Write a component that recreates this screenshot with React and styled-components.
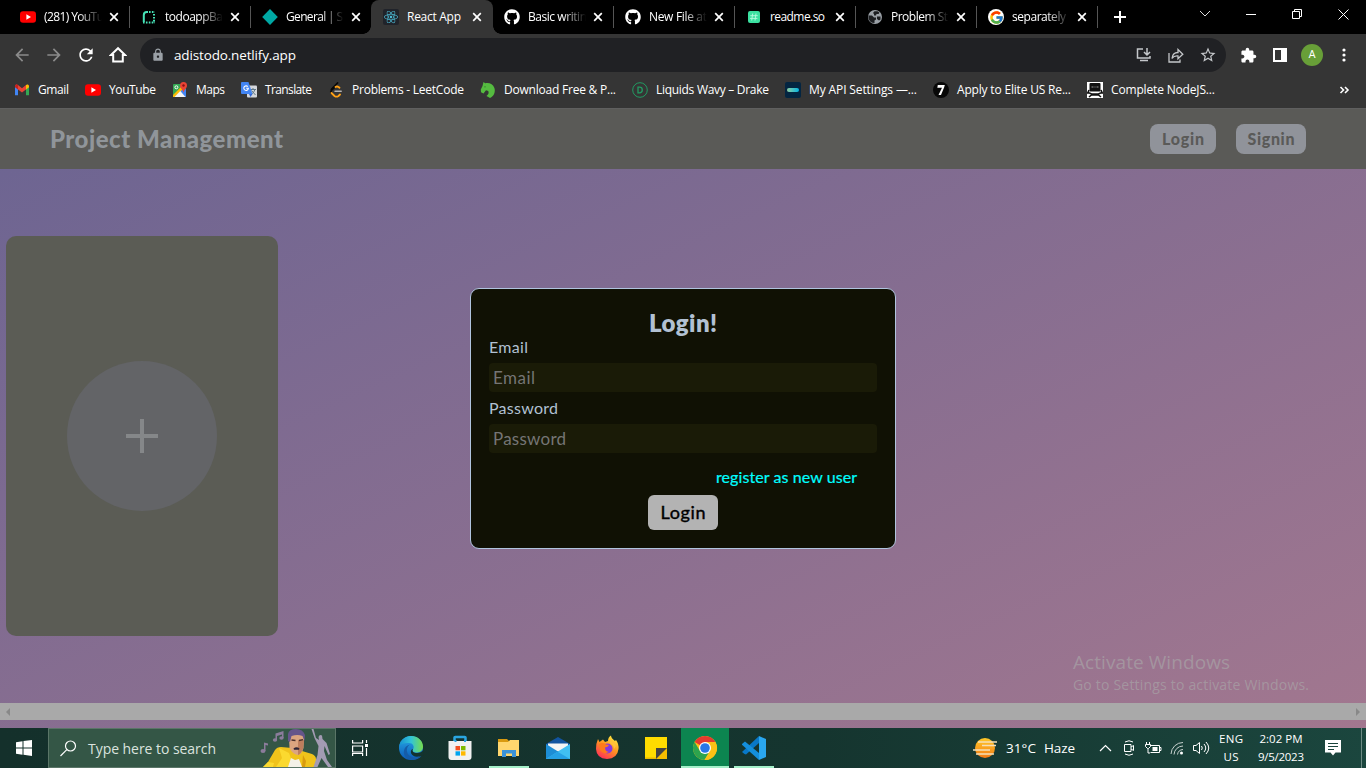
import React, { useLayoutEffect, useRef } from "react";
import styled, { createGlobalStyle } from "styled-components";
import { FaGithub, FaReact } from "react-icons/fa";
import { FcGoogle } from "react-icons/fc";
import { MdArrowBack, MdArrowForward, MdRefresh, MdLock, MdStarBorder, MdExtension } from "react-icons/md";

const Global = createGlobalStyle`
  * { box-sizing: border-box; }
  body { margin: 0; background: #000; overflow: hidden; font-family: "Open Sans", "Noto Sans", sans-serif; }
  svg { display: block; flex: none; }
`;

/* Text that is tracked in or out so that it fills a known width. */
const Line = styled.span`
  display: block;
  flex: none;
  width: ${(p) => p.$w}px;
  white-space: nowrap;
`;
function Fit({ w, children }) {
  const ref = useRef(null);
  useLayoutEffect(() => {
    const el = ref.current;
    el.style.letterSpacing = "0px";
    const natural = el.getBoundingClientRect().width;
    el.style.letterSpacing = (w - natural) / Math.max(1, children.length - 1) + "px";
  }, [w, children]);
  return (
    <Line $w={w}>
      <span ref={ref}>{children}</span>
    </Line>
  );
}

const Screen = styled.div`
  width: 1366px;
  height: 768px;
  display: flex;
  flex-direction: column;
  overflow: hidden;
`;

/* ---------- browser tabs ---------- */
const TabStrip = styled.div`
  height: 34px;
  flex: none;
  display: flex;
  background: #000;
  color: #fff;
  padding-left: 9px;
`;
const Tab = styled.div`
  position: relative;
  width: 121px;
  height: 34px;
  display: flex;
  align-items: center;
  padding-left: 11px;
  font-size: 12px;
  line-height: 16px;
  border-right: 1px solid transparent;
  border-image: ${(p) => (p.$rule ? "linear-gradient(#000 7px, #555 7px, #555 27px, #000 27px) 1" : "none")};
  &::before {
    content: "";
    display: ${(p) => (p.$active ? "block" : "none")};
    position: absolute;
    inset: 0 -1px 0 -1px;
    background: #353535;
    border-radius: 8px 8px 0 0;
  }
  &::after {
    content: "";
    display: ${(p) => (p.$active ? "block" : "none")};
    position: absolute;
    left: -9px;
    right: -9px;
    bottom: 0;
    height: 8px;
    background:
      radial-gradient(circle at 0 0, transparent 7.5px, #353535 8px) left / 8px 8px no-repeat,
      radial-gradient(circle at 100% 0, transparent 7.5px, #353535 8px) right / 8px 8px no-repeat;
  }
  > * { position: relative; z-index: 1; }
`;
const TabTitle = styled.div`
  width: 58px;
  margin: 0 7px 0 8px;
  overflow: hidden;
  ${(p) => p.$fade && "mask-image: linear-gradient(90deg, #000 60%, transparent);"}
`;
const NewTab = styled.div`
  width: 43px;
  display: grid;
  place-items: center;
`;
const WindowButtons = styled.div`
  margin-left: auto;
  display: flex;
  height: 28px;
`;
const WindowButton = styled.div`
  width: 46px;
  display: grid;
  place-items: center;
`;

/* ---------- toolbar ---------- */
const Toolbar = styled.div`
  height: 41px;
  flex: none;
  display: flex;
  align-items: center;
  background: #353535;
  color: #fff;
  padding: 1px 6px 0;
`;
const ToolButton = styled.div`
  width: 32px;
  height: 32px;
  flex: none;
  display: grid;
  place-items: center;
  color: ${(p) => (p.$dim ? "#8b8b8b" : "#fff")};
`;
const Omnibox = styled.div`
  width: 1086px;
  height: 34px;
  margin: 0 6px;
  border-radius: 17px;
  background: #202124;
  display: flex;
  align-items: center;
  padding: 0 2px 0 11px;
  font-size: 13.5px;
  svg.lock { margin-right: 9px; color: #9aa0a6; }
`;
const OmniActions = styled.div`
  margin-left: auto;
  display: flex;
  > div { color: #c4c7ca; }
`;
const Avatar = styled.div`
  width: 22px;
  height: 22px;
  border-radius: 50%;
  background: #689f38;
  font: 11px/22px Roboto, sans-serif;
  text-align: center;
`;
const Bookmarks = styled.div`
  height: 34px;
  flex: none;
  display: flex;
  align-items: center;
  gap: 16px;
  padding: 0 14px 4px 14px;
  background: #353535;
  border-bottom: 1px solid #5f5f5f;
  color: #fff;
`;
const Bookmark = styled.div`
  display: flex;
  align-items: center;
  gap: 8px;
  font-size: 12px;
  line-height: 16px;
`;
const More = styled.div`
  margin-left: auto;
`;

/* ---------- page ---------- */
const Page = styled.main`
  position: relative;
  height: 619px;
  flex: none;
  display: flex;
  flex-direction: column;
  background: linear-gradient(to bottom right, #6b6492, #a2778f);
  font-family: Lato, sans-serif;
`;
const AppHeader = styled.header`
  height: 60px;
  flex: none;
  display: flex;
  align-items: center;
  justify-content: space-between;
  padding: 0 60px 1px 50px;
  background: #5a5a57;
`;
const Brand = styled.h1`
  margin: 0;
  font-size: 24px;
  line-height: 30px;
  font-weight: 900;
  color: #90959a;
`;
const HeaderButtons = styled.nav`
  display: flex;
  gap: 20px;
`;
const HeaderButton = styled.button`
  width: ${(p) => p.$w}px;
  height: 30px;
  border: 0;
  padding: 0;
  border-radius: 8px;
  display: flex;
  align-items: center;
  justify-content: center;
  background: #90939a;
  color: #5a5a58;
  font: 900 16px/20px Lato, sans-serif;
`;
const Board = styled.section`
  height: 534px;
  padding: 67px 6px 0;
`;
const AddCard = styled.div`
  width: 272px;
  height: 400px;
  border-radius: 10px;
  background: #5b5c55;
  display: grid;
  place-items: center;
`;
const AddCircle = styled.div`
  width: 150px;
  height: 150px;
  border-radius: 50%;
  background: #636467;
  display: grid;
  place-items: center;
`;
const ScrollTrack = styled.div`
  height: 17px;
  background: #a9a9a9;
  display: flex;
  align-items: center;
  justify-content: space-between;
  padding: 0 6px;
`;
const Modal = styled.form`
  position: absolute;
  left: 470px;
  top: 179px;
  width: 426px;
  height: 261px;
  border: 1px solid #b0c4de;
  border-radius: 9px;
  background: #101104;
  color: #b2c1d3;
  padding: 19px 18px 18px;
  display: flex;
  flex-direction: column;
`;
const ModalTitle = styled.h2`
  margin: 0;
  display: flex;
  justify-content: center;
  font-size: 24px;
  line-height: 29px;
  font-weight: 800;
`;
const Label = styled.label`
  font-size: 16px;
  line-height: 20px;
  margin-bottom: 6px;
`;
const Field = styled.div`
  height: 29px;
  flex: none;
  margin-bottom: 6px;
  padding: 0 4px;
  border-radius: 4px;
  background: #1a1b07;
  color: #757575;
  font-size: 17px;
  line-height: 30px;
`;
const Register = styled.a`
  align-self: flex-end;
  margin: 8px 20px 8px 0;
  color: #00ffff;
  font-size: 16px;
  line-height: 20px;
  -webkit-text-stroke: 0.2px #00ffff;
`;
const Submit = styled.button`
  align-self: center;
  width: 70px;
  height: 35px;
  border: 0;
  border-radius: 6px;
  background: #b3b3b3;
  color: #000;
  display: flex;
  align-items: center;
  justify-content: center;
  padding: 0 0 1px;
  font: 18px/22px Lato, sans-serif;
  -webkit-text-stroke: 0.4px #000;
`;
const Watermark = styled.div`
  position: absolute;
  left: 1073px;
  top: 541px;
  font-family: "Open Sans", sans-serif;
  color: rgba(170, 170, 170, 0.62);
  font-size: 19px;
  line-height: 25px;
`;
const WatermarkNote = styled.div`
  font-size: 14px;
  line-height: 20px;
`;

/* ---------- taskbar ---------- */
const Taskbar = styled.footer`
  height: 40px;
  flex: none;
  display: flex;
  background: linear-gradient(90deg, #14302b, #15352f 60%, #1b463e);
  color: #fff;
`;
const StartButton = styled.div`
  width: 48px;
  display: grid;
  place-items: center;
`;
const SearchBox = styled.div`
  width: 288px;
  border: 1px solid #5a7567;
  background: #345646;
  display: flex;
  align-items: center;
  padding-left: 11px;
  font-size: 14px;
  color: #dbe3df;
  > span { margin-left: 11px; }
`;
const SearchArt = styled.div`
  margin: 0 1px 0 auto;
  align-self: flex-end;
`;
const TaskView = styled.div`
  width: 48px;
  margin-right: 3px;
  display: grid;
  place-items: center;
`;
const TaskIcons = styled.div`
  display: flex;
  gap: 1px;
`;
const TaskIcon = styled.div`
  width: 48px;
  height: 40px;
  display: grid;
  place-items: center;
  background: ${(p) =>
    p.$open ? `linear-gradient(#a4f0c9, #a4f0c9) center bottom / ${p.$active ? 48 : 40}px 2px no-repeat` : "none"}
    ${(p) => (p.$active ? ", #0c8550" : "")};
`;
const Tray = styled.div`
  margin-left: auto;
  display: flex;
  align-items: center;
  font-size: 13.5px;
`;
const Weather = styled.div`
  display: flex;
  align-items: center;
  gap: 8px;
  margin-right: 18px;
`;
const TrayIcon = styled.div`
  width: 24px;
  display: grid;
  place-items: center;
`;
const Stack = styled.div`
  width: ${(p) => p.$w}px;
  display: flex;
  flex-direction: column;
  align-items: center;
  font-size: 11.5px;
  line-height: 17.5px;
  padding-bottom: 1px;
`;
const Notice = styled.div`
  width: 49px;
  height: 40px;
  display: grid;
  place-items: center;
  padding-right: 8px;
  border-right: 1px solid #6d8b84;
  margin-right: 4px;
`;

const YouTube = () => (
  <svg width="16" height="16" viewBox="0 0 16 16">
    <rect y="2.3" width="16" height="11.4" rx="3" fill="#f00" />
    <path d="M6.4 5.3v5.4L11 8z" fill="#fff" />
  </svg>
);
const Railway = () => (
  <svg width="16" height="16" viewBox="0 0 16 16" fill="none" stroke="#46e3b7" strokeWidth="2">
    <path d="M2.8 13V6q0-3 3-3H7" />
    <path d="M8 3h6M13 5v9M2 13.5h12" strokeDasharray="1.6 1.3" />
  </svg>
);
const Diamond = () => (
  <svg width="16" height="16" viewBox="0 0 16 16">
    <path d="M8 0l7.8 8L8 16 .2 8z" fill="#00a8a4" />
  </svg>
);
const ReactTile = styled.div`
  width: 16px;
  height: 16px;
  display: grid;
  place-items: center;
  border-radius: 2px;
  background: #20232a;
  color: #4dbbd5;
`;
const Hash = () => (
  <svg width="16" height="16" viewBox="0 0 16 16">
    <rect x="2" y="2" width="12" height="12" rx="2" fill="#3be0a0" />
    <path d="M6.7 4.5l-1 7M10 4.5l-1 7M4.3 6.7h7.4M4 9.4h7.4" stroke="#b8fbe0" strokeWidth=".9" />
  </svg>
);
const WhiteDisc = styled.div`
  width: 16px;
  height: 16px;
  border-radius: 50%;
  background: #fff;
  display: grid;
  place-items: center;
`;
const Globe = () => (
  <svg width="16" height="16" viewBox="0 0 16 16">
    <circle cx="8" cy="8" r="7" fill="#9aa0a6" />
    <path d="M1.500 6.500h3.500l2 2h2v2l-1.500 1 0 2.500q-5 0-6-5zM7.500 2.300h3l2 1.200-1 1.500H9.500L9 6.500H7V5l-1-1zM10 7.500h3.500v3l-1.500 1L10 10z" fill="#1c1e21" />
  </svg>
);
const Cross = () => (
  <svg width="10" height="10" viewBox="0 0 10 10">
    <path d="M1.200 1.200l7.600 7.600M8.800 1.200L1.200 8.800" stroke="#fff" strokeWidth="1.700" />
  </svg>
);

const Gmail = () => (
  <svg width="16" height="16" viewBox="0 0 16 16">
    <path d="M1 4v9.3h3V7z" fill="#4285f4" />
    <path d="M12 7v6.3h3V4z" fill="#34a853" />
    <path d="M1 4.2C1 2.5 3 2 4 3l4 3.3L12 3l.3 4.2L8 10.5 3.7 7.2z" fill="#ea4335" />
    <path d="M1 4.2C1 2.5 3 2 4 3v4.4L1 5.2z" fill="#c5221f" />
    <path d="M15 4.2C15 2.5 13 2 12 3v4.4l3-2.2z" fill="#fbbc04" />
  </svg>
);
const Maps = () => (
  <svg width="16" height="16" viewBox="0 0 16 16">
    <rect x="1" y="2" width="13" height="13" rx="1" fill="#34a853" />
    <path d="M8 8l6-1v8H8z" fill="#4285f4" />
    <path d="M1 13L11 3l2 2L3 15H1z" fill="#fbbc04" />
    <path d="M2.500 15L8.300 9l5.200 6z" fill="#f5f5f5" />
    <circle cx="4.400" cy="5.300" r="1.500" fill="none" stroke="#fff" />
    <path d="M11.500 0a3.500 3.500 0 0 1 3.500 3.500c0 2.500-2.500 3.500-3.500 7-1-3.500-3.500-4.500-3.500-7A3.500 3.500 0 0 1 11.500 0z" fill="#ea4335" />
    <circle cx="11.500" cy="3.500" r="1.200" fill="#811" />
  </svg>
);
const Translate = () => (
  <svg width="16" height="16" viewBox="0 0 16 16">
    <rect x="6" y="3.500" width="10" height="12" rx="1" fill="#d4d7dc" />
    <path d="M9 7.500h6M12 6v1.500M14 7.500q-1 3.500-4 5M10.500 8.500l4 4.500" stroke="#607988" fill="none" />
    <path d="M1 0h6.500l4 12H1a1 1 0 0 1-1-1V1a1 1 0 0 1 1-1z" fill="#4285f4" />
    <path d="M6.800 4.600a2.300 2.300 0 1 0 .6 1.700H5.200" stroke="#fff" fill="none" strokeWidth="1.100" />
    <path d="M8 12h3.500L9.500 15z" fill="#3367d6" />
  </svg>
);
const Leet = () => (
  <svg width="16" height="16" viewBox="0 0 16 16" fill="none" strokeLinecap="round" strokeWidth="1.800">
    <path d="M9.500 1L3.500 7.300" stroke="#080808" />
    <path d="M6.300 5.500L3.500 8.200q-1.300 1.600 0 3" stroke="#080808" />
    <path d="M3.500 11l3 3q2 1.400 4 0l1.500-1.500" stroke="#ffa116" />
    <path d="M11.500 5.800l-1-.8q-1.500-1-3 0" stroke="#ffa116" />
    <path d="M7 9.300h6.200" stroke="#b3b3b3" strokeWidth="1.500" />
  </svg>
);
const Horse = () => (
  <svg width="16" height="16" viewBox="0 0 16 16">
    <path d="M3.500 0l1.700 1.300C9 .3 13 2 14.400 6c1.300 4-.6 8.500-4.400 10L6.500 14c2-1.500 2.500-3 1.800-5L6 8.300 3.500 11.500 1 10.300.8 7.500 2.500 4z" fill="#55bb40" />
    <circle cx="5" cy="4.800" r=".6" fill="#246b25" />
  </svg>
);
const Drake = () => (
  <svg width="16" height="16" viewBox="0 0 16 16" fill="none" stroke="#229b62">
    <circle cx="8" cy="8" r="7.300" />
    <path d="M6 5.200h1.500Q10.300 5.200 10.300 8T7.500 10.800H6z" strokeWidth="1.300" />
  </svg>
);
const Tmdb = () => (
  <svg width="16" height="16" viewBox="0 0 16 16">
    <defs>
      <linearGradient id="tm">
        <stop stopColor="#90cea1" />
        <stop offset="1" stopColor="#01b4e4" />
      </linearGradient>
    </defs>
    <rect width="16" height="16" rx="2" fill="#032541" />
    <rect x="2" y="6" width="12" height="4" rx="2" fill="url(#tm)" />
  </svg>
);
const Seven = () => (
  <svg width="16" height="16" viewBox="0 0 16 16">
    <circle cx="8" cy="8" r="8" fill="#080808" />
    <path d="M4.800 3h7l-.6 2.300L8 13H5.500L9 5.800H4.300z" fill="#fff" />
  </svg>
);
const Rover = () => (
  <svg width="16" height="16" viewBox="0 0 16 16">
    <rect width="16" height="16" fill="#fff" />
    <rect x="2.500" y="1" width="11" height="8.500" rx="1" fill="#111" />
    <path d="M4.500 5h2M7.500 5h1M9.500 5h2" stroke="#999" />
    <path d="M0 11h2.500l2 1h7l2-1H16M2 15l2.500-2h7L14 15M2 8l-1 2.500M14 8l1 2.500" stroke="#111" strokeWidth="1.600" fill="none" />
  </svg>
);

const tabs = [
  { t: "(281) YouTu", w: 60, icon: <YouTube />, fade: true, rule: true },
  { t: "todoappBa", w: 58, icon: <Railway />, fade: true, rule: true },
  { t: "General | S", w: 57, icon: <Diamond />, fade: true },
  { t: "React App", w: 54, icon: <ReactTile><FaReact size={14} /></ReactTile>, active: true },
  { t: "Basic writin", w: 59, icon: <FaGithub size={16} />, fade: true, rule: true },
  { t: "New File at", w: 58, icon: <FaGithub size={16} />, fade: true, rule: true },
  { t: "readme.so", w: 55, icon: <Hash />, rule: true },
  { t: "Problem St", w: 57, icon: <Globe />, fade: true, rule: true },
  { t: "separately", w: 54, icon: <WhiteDisc><FcGoogle size={15} /></WhiteDisc>, fade: true, rule: true },
];

const bookmarks = [
  ["Gmail", 31, <Gmail />],
  ["YouTube", 47, <YouTube />],
  ["Maps", 29, <Maps />],
  ["Translate", 47, <Translate />],
  ["Problems - LeetCode", 112, <Leet />],
  ["Download Free & P...", 112, <Horse />],
  ["Liquids Wavy – Drake", 113, <Drake />],
  ["My API Settings —...", 108, <Tmdb />],
  ["Apply to Elite US Re...", 114, <Seven />],
  ["Complete NodeJS...", 104, <Rover />],
];

const Performer = () => (
  <svg width="74" height="38" viewBox="0 0 74 38">
    <g fill="#8b7c9b">
      <ellipse cx="3" cy="22" rx="2.500" ry="2" />
      <path d="M4 22V13.500l4 1v2l-2.500-.5v6z" />
      <ellipse cx="15" cy="11" rx="2.200" ry="1.800" />
      <ellipse cx="21.500" cy="9" rx="2.200" ry="1.800" />
      <path d="M15.500 11V4.500L23.500 2v7H22V5.500l-5 1.500v4z" />
    </g>
    <path d="M3 38l5-5 7-12q2-3 6-3l11 1 10 3 10 3q4 2 4 5v8z" fill="#f0c31a" />
    <path d="M3 38l5-5 6 1-1 4zM19 19l10 5 3 8-2 6H16l6-9z" fill="#fbd92f" />
    <path d="M31 29l4 2 4-1 3 8H28z" fill="#f4f1e8" />
    <path d="M43 26l3 6-1 6h-3z" fill="#d99b0c" />
    <path d="M29 8q0-5 7-5t8 5l-.500 11q-2 7-6 7-5-1-8-7z" fill="#dba580" />
    <path d="M38 11h6l-1 9q-2 5-5 6z" fill="#bd7e5d" />
    <path d="M28 12V5q1-5 8-5t9 6l-.500 6-2-5q-5-2-11 0l-1.500 6z" fill="#65558a" />
    <path d="M33.500 19.500q3-2.500 6 0l-.500 1.200h-5z" fill="#2d2435" />
    <path d="M31.500 11l4 .5M39 11.500l4-.8" stroke="#4a302b" strokeWidth="1.300" />
    <path d="M53.500 0l2.500 9 3 2-.500-3q1-3 3.500-1.500l.5 3.500 4 4 3.500 11-1.500 1-4-9-.500 5 3 9 5 7h-4l-6.500-9-4 9h-4l4-12 1-9-4-8-3-9z" fill="#a39bb3" />
  </svg>
);

const Edge = () => (
  <svg width="26" height="26" viewBox="0 0 26 26">
    <defs>
      <linearGradient id="ed">
        <stop stopColor="#168fd2" />
        <stop offset=".5" stopColor="#32c4d7" />
        <stop offset="1" stopColor="#77dd4b" />
      </linearGradient>
      <linearGradient id="eb" x1="0" y1="0" x2="0" y2="1">
        <stop stopColor="#28a9e6" />
        <stop offset="1" stopColor="#0b5ab8" />
      </linearGradient>
    </defs>
    <circle cx="13" cy="13" r="12" fill="url(#eb)" />
    <path d="M1 12C2 5 7 1 13 1c7 0 12 5 12 10.500 0 4-3 6-6.500 6-3 0-4.500-1.300-3.500-3 1.800-3 0-6.500-4-6.500C6 8 2 9 1 12z" fill="url(#ed)" />
    <path d="M12.500 9.500C8 11 7.500 18 12 21c3.500 2.300 7.500 2 11.500-.3C21 24 17 25.500 13 25 8 24 5 20 6 15.500c.6-3 3-5.500 6.500-6z" fill="#155ca8" />
    <path d="M15 14c-1.500 2.500 1 4 4 4s5-1 5.500-2.500L26 20l-3.500 1c-4 1.500-8 .5-9.300-2.500-.9-2.300 0-4 1.800-4.500z" fill="#14332e" />
  </svg>
);
const Store = () => (
  <svg width="26" height="26" viewBox="0 0 26 26">
    <path d="M7.500 7V2.500q0-.5.8-.5h9.400q.8 0 .8.500V7" fill="none" stroke="#2aa6e2" strokeWidth="2.500" />
    <path d="M1.500 6h23v16q0 3-3 3h-17q-3 0-3-3z" fill="#f1f1f1" />
    <path d="M7.500 5h2v2h-2zM17 5h2v2h-2z" fill="#2aa6e2" />
    <path d="M8.500 11h4.500v4.300H8.500z" fill="#f25022" />
    <path d="M14 11h4.500v4.300H14z" fill="#7fba00" />
    <path d="M8.500 16.300h4.500v4.300H8.500z" fill="#00a4ef" />
    <path d="M14 16.300h4.500v4.300H14z" fill="#ffb900" />
  </svg>
);
const Explorer = () => (
  <svg width="24" height="24" viewBox="0 0 24 24">
    <path d="M1 3h9l2 2v4H1z" fill="#d99a10" />
    <path d="M1 6l10 0 2-2h9v16H1z" fill="#ffd66e" />
    <path d="M5 21v-7h14v7h-4v-3.500H9V21z" fill="#3b93d8" />
  </svg>
);
const Mail = () => (
  <svg width="26" height="26" viewBox="0 0 26 26">
    <path d="M1 9l12-7 12 7v6H1z" fill="#1254a0" />
    <path d="M3 8.500h20v8H3z" fill="#f4f4f4" />
    <path d="M1 9l24 15H1z" fill="#1d8dd5" />
    <path d="M25 9v15H1l11.500-7.300z" fill="#40bff2" />
    <path d="M12.500 16.700L25 24H1z" fill="#25a0e5" />
  </svg>
);
const Firefox = () => (
  <svg width="26" height="26" viewBox="0 0 26 26">
    <defs>
      <linearGradient id="ff" x1=".8" y1="0" x2=".2" y2="1">
        <stop stopColor="#fff044" />
        <stop offset=".45" stopColor="#ff981f" />
        <stop offset="1" stopColor="#ff285c" />
      </linearGradient>
    </defs>
    <path d="M4 4l1.500 3L9 4.500 11 7l3-1q0-4 3-5.500Q17 3 21 6l1-1q3 4 2.500 9-1 9.500-11.500 10Q2.500 23.500 2 14q0-6 2-10z" fill="url(#ff)" />
    <circle cx="13.500" cy="13.500" r="5" fill="#8738dd" />
    <path d="M5 9q4-2 7 .5l3 .5q-1 2-4 2.500 0 4 4 4.500-6 3-9-2z" fill="#ff7a1b" />
    <path d="M16 8q4 2 4 6l2-3q-2-5-6-6z" fill="#ffc13b" />
  </svg>
);
const Sticky = () => (
  <svg width="24" height="24" viewBox="0 0 24 24">
    <path d="M1 1h22v22H1z" fill="#ffdc00" />
    <path d="M1 21.500h11V23H1z" fill="#e9b900" />
    <path d="M12 12h11v11H12z" fill="#f6bd00" />
    <path d="M12 12h11L12 23z" fill="#434343" />
  </svg>
);
const Chrome = () => (
  <svg width="26" height="26" viewBox="0 0 26 26">
    <circle cx="13" cy="13" r="12" fill="#fbc116" />
    <path d="M13 13L2.600 7A12 12 0 0 1 23.400 7z" fill="#e53a2f" />
    <path d="M2.600 7A12 12 0 0 0 12.500 25L18 16 8 16z" fill="#2da44e" />
    <path d="M13 7h10.400A12 12 0 0 1 12.500 25L18 16z" fill="#fbc116" />
    <circle cx="13" cy="13" r="6" fill="#fff" />
    <circle cx="13" cy="13" r="4.800" fill="#2877e8" />
  </svg>
);
const Code = () => (
  <svg width="26" height="26" viewBox="0 0 26 26">
    <path d="M18 1l7 3v18l-7 3z" fill="#2aa7ef" />
    <path d="M18 1v7L5 19.500l-1.500-.5L1 17z" fill="#0878c7" />
    <path d="M1 9l3-2.500L18 18v7L1 9.800z" fill="#148fdb" />
  </svg>
);
const taskIcons = [
  [<Edge />], [<Store />], [<Explorer />, true], [<Mail />], [<Firefox />], [<Sticky />], [<Chrome />, true, true], [<Code />, true],
];

export default function App() {
  return (
    <Screen>
      <Global />
      <TabStrip>
        {tabs.map((tab) => (
          <Tab key={tab.t} $active={tab.active} $rule={tab.rule}>
            {tab.icon}
            <TabTitle $fade={tab.fade}><Fit w={tab.w}>{tab.t}</Fit></TabTitle>
            <Cross />
          </Tab>
        ))}
        <NewTab>
          <svg width="12" height="12"><path d="M6 0v12M0 6h12" stroke="#fff" strokeWidth="2" /></svg>
        </NewTab>
        <WindowButtons>
          <WindowButton><svg width="12" height="8"><path d="M1 1l5 5 5-5" fill="none" stroke="#ddd" /></svg></WindowButton>
          <WindowButton><svg width="10" height="1"><path d="M0 .5h10" stroke="#fff" /></svg></WindowButton>
          <WindowButton>
            <svg width="10" height="10" fill="none" stroke="#fff"><path d="M.5 2.500h7v7h-7zM2.500 2.500v-2h7v7h-2" /></svg>
          </WindowButton>
          <WindowButton><svg width="11" height="11"><path d="M.5 .5l10 10M10.500 .5l-10 10" stroke="#fff" /></svg></WindowButton>
        </WindowButtons>
      </TabStrip>
      <Toolbar>
        <ToolButton $dim><MdArrowBack size={20} /></ToolButton>
        <ToolButton $dim><MdArrowForward size={20} /></ToolButton>
        <ToolButton><MdRefresh size={20} /></ToolButton>
        <ToolButton>
          <svg width="18" height="18" fill="none" stroke="#fff" strokeWidth="2"><path d="M9 2.200L2 9h2.200v6.500h9.600V9H16z" /></svg>
        </ToolButton>
        <Omnibox>
          <MdLock className="lock" size={14} />
          <Fit w={122}>adistodo.netlify.app</Fit>
          <OmniActions>
            <ToolButton>
              <svg width="16" height="14" fill="none" stroke="#c4c7ca" strokeWidth="1.500">
                <path d="M7 1H1.500v9H14V8M11 0v6.500M8 4l3 3 3-3M4 12.500h8" />
              </svg>
            </ToolButton>
            <ToolButton>
              <svg width="16" height="15" fill="none" stroke="#c4c7ca" strokeWidth="1.300">
                <path d="M1 5v9h11v-2.500M4 10.500q.5-6 6-6V1.500l4.800 4.700-4.800 4.600V8Q6 7.500 4 10.500z" />
              </svg>
            </ToolButton>
            <ToolButton><MdStarBorder size={18} /></ToolButton>
          </OmniActions>
        </Omnibox>
        <ToolButton><MdExtension size={17} /></ToolButton>
        <ToolButton>
          <svg width="14" height="14"><path d="M0 0h14v14H0zM2 2v10h6V2z" fill="#fff" fillRule="evenodd" /></svg>
        </ToolButton>
        <ToolButton><Avatar>A</Avatar></ToolButton>
        <ToolButton>
          <svg width="4" height="14" fill="#fff"><circle cx="2" cy="2" r="1.600" /><circle cx="2" cy="7" r="1.600" /><circle cx="2" cy="12" r="1.600" /></svg>
        </ToolButton>
      </Toolbar>
      <Bookmarks>
        {bookmarks.map(([t, w, icon]) => (
          <Bookmark key={t}>{icon}<Fit w={w}>{t}</Fit></Bookmark>
        ))}
        <More>
          <svg width="13" height="8" fill="none" stroke="#fff" strokeWidth="1.600"><path d="M1.500 1l3 3-3 3M6 1l3 3-3 3" /></svg>
        </More>
      </Bookmarks>

      <Page>
        <AppHeader>
          <Brand><Fit w={233}>Project Management</Fit></Brand>
          <HeaderButtons>
            <HeaderButton $w={66}><Fit w={42}>Login</Fit></HeaderButton>
            <HeaderButton $w={70}><Fit w={47}>Signin</Fit></HeaderButton>
          </HeaderButtons>
        </AppHeader>
        <Board>
          <AddCard>
            <AddCircle>
              <svg width="34" height="34" stroke="#858789" strokeWidth="4"><path d="M1 17h32M17 0v34" /></svg>
            </AddCircle>
          </AddCard>
        </Board>
        <ScrollTrack>
          <svg width="4" height="8"><path d="M4 0v8L0 4z" fill="#888" /></svg>
          <svg width="4" height="8"><path d="M0 0v8l4-4z" fill="#888" /></svg>
        </ScrollTrack>
        <Modal>
          <ModalTitle><Fit w={68}>Login!</Fit></ModalTitle>
          <Label><Fit w={39}>Email</Fit></Label>
          <Field><Fit w={42}>Email</Fit></Field>
          <Label><Fit w={69}>Password</Fit></Label>
          <Field><Fit w={73}>Password</Fit></Field>
          <Register><Fit w={141}>register as new user</Fit></Register>
          <Submit><Fit w={45}>Login</Fit></Submit>
        </Modal>
        <Watermark>
          <Fit w={157}>Activate Windows</Fit>
          <WatermarkNote><Fit w={236}>Go to Settings to activate Windows.</Fit></WatermarkNote>
        </Watermark>
      </Page>

      <Taskbar>
        <StartButton>
          <svg width="16" height="16" fill="#fff"><path d="M0 2.300L6.500 1.300v6.200H0zM7.500 1.100L16 0v7.500H7.500zM0 8.500h6.500v6.200L0 13.700zM7.500 8.500H16V16l-8.500-1.200z" /></svg>
        </StartButton>
        <SearchBox>
          <svg width="17" height="17" fill="none" stroke="#fff" strokeWidth="1.200"><circle cx="10.500" cy="6" r="5" /><path d="M6.800 9.700L.5 16" /></svg>
          <span><Fit w={128}>Type here to search</Fit></span>
          <SearchArt><Performer /></SearchArt>
        </SearchBox>
        <TaskView>
          <svg width="16" height="16" fill="none" stroke="#fff" strokeWidth="1.200">
            <path d="M.6 0v3h10V0M.6 6h10v6h-10zM.6 16v-2.500h10V16M14.500 0v3M14.500 8v8" />
            <path d="M13 4h3v3h-3z" fill="#fff" stroke="none" />
          </svg>
        </TaskView>
        <TaskIcons>
          {taskIcons.map(([icon, open, active], i) => (
            <TaskIcon key={i} $open={open} $active={active}>{icon}</TaskIcon>
          ))}
        </TaskIcons>
        <Tray>
          <Weather>
            <svg width="25" height="22">
              <defs><linearGradient id="sun" x1="0" y1="0" x2="0" y2="1"><stop stopColor="#ffc928" /><stop offset="1" stopColor="#f47b16" /></linearGradient></defs>
              <circle cx="12" cy="11" r="10" fill="url(#sun)" />
              <path d="M5 5h19M9 8.500h14M0 13h17M3 17h18" stroke="#f5dfb8" strokeWidth="1.700" />
            </svg>
            <Fit w={30}>31°C</Fit>
            <Fit w={31}>Haze</Fit>
          </Weather>
          <TrayIcon><svg width="13" height="8" fill="none" stroke="#fff" strokeWidth="1.200"><path d="M1 7l5.500-5.500L12 7" /></svg></TrayIcon>
          <TrayIcon>
            <svg width="12" height="16" fill="none" stroke="#fff"><path d="M1.500 4.500h6.500v7h-6.500zM8 7l2.500-1.500v5L8 9M2 2q4-2.500 8 0M2 14q4 2.500 8 0" /></svg>
          </TrayIcon>
          <TrayIcon>
            <svg width="17" height="13" fill="none" stroke="#fff"><path d="M6 3.500h8.500v7h-9M14.500 5.500h1.500v3h-1.500M1.500 0v2.500M4.500 0v2.500M.5 2.500h5v2l-2 2h-1l-2-2zM3 6.500V11h2" /><path d="M7.500 5h5v4h-5z" fill="#fff" stroke="none" /></svg>
          </TrayIcon>
          <TrayIcon>
            <svg width="14" height="14" fill="none" stroke="#fff"><path d="M1 13A12 12 0 0 1 13 1.500M4 13.500A9 9 0 0 1 13 5M7.500 13.500A6 6 0 0 1 13 8.500" stroke="#c8d2cf" /><circle cx="11.500" cy="12" r="1.500" fill="#fff" stroke="none" /></svg>
          </TrayIcon>
          <TrayIcon>
            <svg width="17" height="14" fill="none" stroke="#fff"><path d="M.5 4.500h2.500L6.500 1.500v11L3 9.500H.5zM8.500 5q1.500 2 0 4M11 3q3.500 4 0 8M13 1q5.500 6 0 12" /></svg>
          </TrayIcon>
          <Stack $w={36}><Fit w={24}>ENG</Fit><Fit w={15}>US</Fit></Stack>
          <Stack $w={64}><Fit w={43}>2:02 PM</Fit><Fit w={46}>9/5/2023</Fit></Stack>
          <Notice>
            <svg width="16" height="16"><path d="M0 0h16v12.500h-5.500L8 15.500 5.500 12.500H0z" fill="#fff" /><path d="M3 3.500h10M3 6.500h10M3 9.500h6" stroke="#1b443c" /></svg>
          </Notice>
        </Tray>
      </Taskbar>
    </Screen>
  );
}
